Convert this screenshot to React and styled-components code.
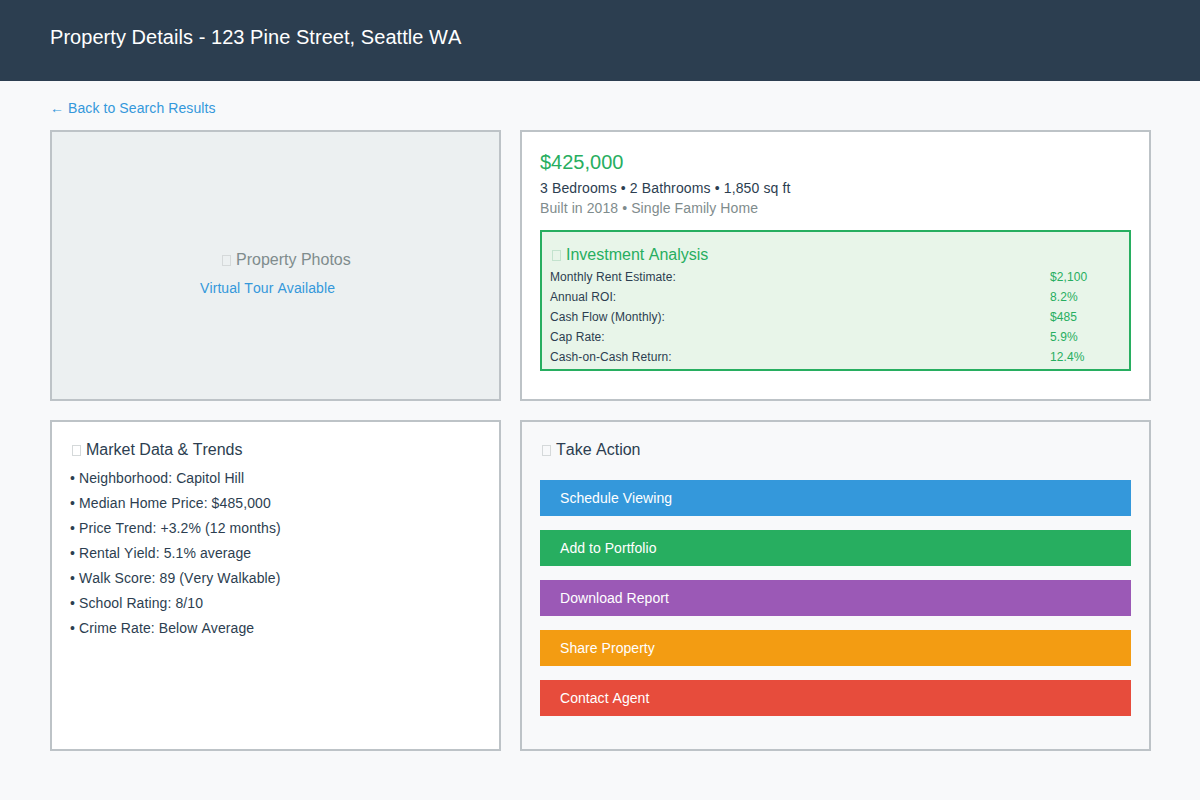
import React from "react";
import styled, { createGlobalStyle } from "styled-components";

const GlobalStyle = createGlobalStyle`
  html, body {
    margin: 0;
    padding: 0;
    background: #f8f9fa;
    font-family: "Liberation Sans", Arial, sans-serif;
    color: #2c3e50;
    text-rendering: optimizeSpeed;
    font-kerning: none;
  }
  * { box-sizing: border-box; }
`;

const Header = styled.header`
  height: 81px;
  background: #2c3e50;
  color: #fff;
  font-size: 20px;
  letter-spacing: 0.05px;
  line-height: 23px;
  padding: 26px 50px 0;
`;

const Main = styled.main`
  padding: 0 49px 0 50px;
`;

const BackLink = styled.a`
  display: block;
  height: 49px;
  padding-top: 19px;
  font-size: 14px;
  letter-spacing: 0.09px;
  line-height: 16px;
  color: #3498db;
`;

const Grid = styled.div`
  display: grid;
  grid-template-columns: 451px 631px;
  grid-template-rows: 271px 331px;
  column-gap: 19px;
  row-gap: 19px;
`;

const Panel = styled.section`
  border: 2px solid #bdc3c7;
  background: ${(p) => p.$bg || "#fff"};
  padding: ${(p) => p.$pad || "18px"};
`;

const PhotoPanel = styled(Panel)`
  background: #ecf0f1;
  padding: 119px 0 0;
`;

const PhotoTitle = styled.div`
  margin-left: 169px;
  font-size: 16px;
  line-height: 18px;
  color: #7f8c8d;
`;

const TourLink = styled.div`
  margin-left: 148px;
  margin-top: 11px;
  font-size: 14px;
  letter-spacing: 0.09px;
  line-height: 16px;
  color: #3498db;
`;

const Tofu = styled.span`
  display: inline-block;
  width: 9px;
  height: 11px;
  margin: 0 5px 0 1px;
  border: 1px solid ${(p) => p.$color};
  vertical-align: -1px;
`;

const Price = styled.div`
  font-size: 20px;
  line-height: 23px;
  color: #27ae60;
  margin: 1px 0 6px;
`;

const Specs = styled.div`
  font-size: 14px;
  letter-spacing: 0.13px;
  line-height: 16px;
  margin-bottom: 4px;
`;

const Built = styled(Specs)`
  color: #7f8c8d;
  letter-spacing: 0.09px;
  margin-bottom: 14px;
`;

const Analysis = styled.div`
  border: 2px solid #27ae60;
  background: #e8f5e9;
  height: 141px;
  padding: 14px 0 0 8px;
`;

const AnalysisTitle = styled.div`
  font-size: 16px;
  line-height: 18px;
  color: #27ae60;
  margin-bottom: 3px;
  padding-left: 1px;
`;

const MetricRow = styled.div`
  display: grid;
  grid-template-columns: 500px 1fr;
  height: 20px;
  font-size: 12px;
  letter-spacing: 0.08px;
  line-height: 20px;
`;

const MetricValue = styled.span`
  color: #27ae60;
`;

const SectionTitle = styled.h2`
  margin: 0 0 7px;
  padding-left: 1px;
  font-size: 16px;
  font-weight: 400;
  line-height: 18px;
`;

const MarketPanel = styled(Panel)`
  padding: 19px 18px;
`;

const MarketList = styled.ul`
  list-style: none;
  margin: 0;
  padding: 0;
`;

const MarketItem = styled.li`
  font-size: 14px;
  letter-spacing: 0.1px;
  line-height: 25px;
`;

const ActionPanel = styled(Panel)`
  padding: 19px 18px;
`;

const ActionStack = styled.div`
  display: flex;
  flex-direction: column;
  gap: 14px;
  margin-top: 21px;
`;

const ActionButton = styled.button`
  display: block;
  width: 100%;
  height: 36px;
  border: 0;
  padding: 0 20px;
  background: ${(p) => p.$color};
  color: #fff;
  font: 14px/36px "Liberation Sans", Arial, sans-serif;
  letter-spacing: 0.05px;
  text-rendering: optimizeSpeed;
  font-kerning: none;
  text-align: left;
`;

const metrics = [
  ["Monthly Rent Estimate:", "$2,100"],
  ["Annual ROI:", "8.2%"],
  ["Cash Flow (Monthly):", "$485"],
  ["Cap Rate:", "5.9%"],
  ["Cash-on-Cash Return:", "12.4%"],
];

const market = [
  "Neighborhood: Capitol Hill",
  "Median Home Price: $485,000",
  "Price Trend: +3.2% (12 months)",
  "Rental Yield: 5.1% average",
  "Walk Score: 89 (Very Walkable)",
  "School Rating: 8/10",
  "Crime Rate: Below Average",
];

const actions = [
  ["Schedule Viewing", "#3498db"],
  ["Add to Portfolio", "#27ae60"],
  ["Download Report", "#9b59b6"],
  ["Share Property", "#f39c12"],
  ["Contact Agent", "#e74c3c"],
];

export default function App() {
  return (
    <>
      <GlobalStyle />
      <Header>Property Details - 123 Pine Street, Seattle WA</Header>
      <Main>
        <BackLink>← Back to Search Results</BackLink>
        <Grid>
          <PhotoPanel>
            <PhotoTitle>
              <Tofu $color="#d5d9da" />
              Property Photos
            </PhotoTitle>
            <TourLink>Virtual Tour Available</TourLink>
          </PhotoPanel>

          <Panel>
            <Price>$425,000</Price>
            <Specs>3 Bedrooms • 2 Bathrooms • 1,850 sq ft</Specs>
            <Built>Built in 2018 • Single Family Home</Built>
            <Analysis>
              <AnalysisTitle>
                <Tofu $color="#c3e3ce" />
                Investment Analysis
              </AnalysisTitle>
              {metrics.map(([label, value]) => (
                <MetricRow key={label}>
                  <span>{label}</span>
                  <MetricValue>{value}</MetricValue>
                </MetricRow>
              ))}
            </Analysis>
          </Panel>

          <MarketPanel>
            <SectionTitle>
              <Tofu $color="#d5d9da" />
              Market Data &amp; Trends
            </SectionTitle>
            <MarketList>
              {market.map((item) => (
                <MarketItem key={item}>• {item}</MarketItem>
              ))}
            </MarketList>
          </MarketPanel>

          <ActionPanel $bg="#f8f9fa">
            <SectionTitle>
              <Tofu $color="#d5d9da" />
              Take Action
            </SectionTitle>
            <ActionStack>
              {actions.map(([label, color]) => (
                <ActionButton key={label} $color={color}>
                  {label}
                </ActionButton>
              ))}
            </ActionStack>
          </ActionPanel>
        </Grid>
      </Main>
    </>
  );
}
